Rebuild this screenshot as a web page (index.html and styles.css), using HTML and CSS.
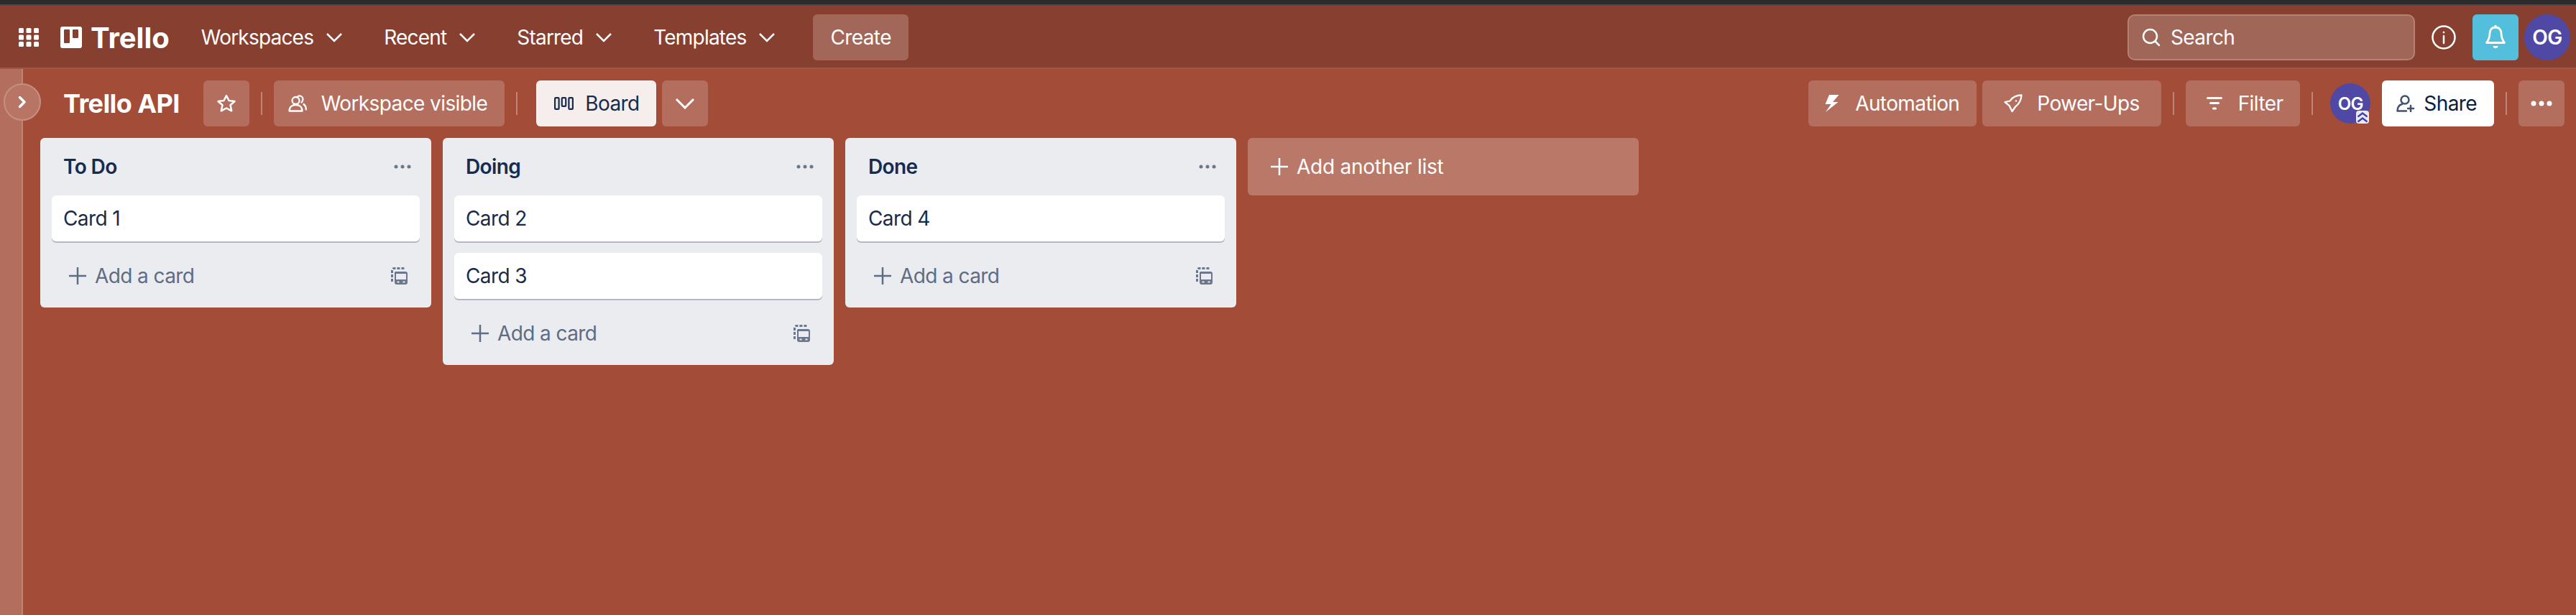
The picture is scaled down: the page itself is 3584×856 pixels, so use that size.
FILE: index.html
```html
<!DOCTYPE html>
<html lang="en">

<head>
    <meta charset="UTF-8">
    <meta name="viewport" content="width=device-width, initial-scale=1.0">
    <title>Trello API</title>
    <link rel="stylesheet" href="styles.css">
</head>

<body>
    <div class="chrome"></div>
    <header class="topbar">
        <svg class="grid-icon" width="28" height="26" viewBox="0 0 28 26" fill="#fff">
            <rect x="0" y="0" width="7" height="7" rx="1.5"/><rect x="10.500" y="0" width="7" height="7" rx="1.5"/><rect x="21" y="0" width="7" height="7" rx="1.5"/>
            <rect x="0" y="9.500" width="7" height="7" rx="1.5"/><rect x="10.500" y="9.500" width="7" height="7" rx="1.5"/><rect x="21" y="9.500" width="7" height="7" rx="1.5"/>
            <rect x="0" y="19" width="7" height="7" rx="1.5"/><rect x="10.500" y="19" width="7" height="7" rx="1.500"/><rect x="21" y="19" width="7" height="7" rx="1.5"/>
        </svg>
        <div class="logo">
            <svg width="30" height="30" viewBox="0 0 30 30" fill="#fff">
                <path fill-rule="evenodd" d="M3 0h24a3 3 0 0 1 3 3v24a3 3 0 0 1-3 3H3a3 3 0 0 1-3-3V3a3 3 0 0 1 3-3zm2 5v17a1 1 0 0 0 1 1h6a1 1 0 0 0 1-1V5a1 1 0 0 0-1-1H6a1 1 0 0 0-1 1zm12 0v10a1 1 0 0 0 1 1h6a1 1 0 0 0 1-1V5a1 1 0 0 0-1-1h-6a1 1 0 0 0-1 1z"/>
            </svg>
            <span>Trello</span>
        </div>
        <nav class="nav">
            <a class="nav-item">Workspaces <svg class="chev" viewBox="0 0 24 14"><path d="M2 2l10 10L22 2"/></svg></a>
            <a class="nav-item">Recent <svg class="chev" viewBox="0 0 24 14"><path d="M2 2l10 10L22 2"/></svg></a>
            <a class="nav-item">Starred <svg class="chev" viewBox="0 0 24 14"><path d="M2 2l10 10L22 2"/></svg></a>
            <a class="nav-item">Templates <svg class="chev" viewBox="0 0 24 14"><path d="M2 2l10 10L22 2"/></svg></a>
        </nav>
        <a class="create">Create</a>
        <div class="topbar-right">
            <div class="search">
                <svg width="26" height="26" viewBox="0 0 26 26" fill="none" stroke="#fff" stroke-width="2.500"><circle cx="11.500" cy="11.500" r="9.500"/><path d="M18.500 18.500l5.500 5.500" stroke-linecap="round"/></svg>
                <span>Search</span>
            </div>
            <svg class="info" width="34" height="34" viewBox="0 0 34 34" fill="none" stroke="#fff" stroke-width="2.500"><circle cx="17" cy="17" r="15.500"/><path d="M17 15v10" stroke-linecap="round"/><circle cx="17" cy="10" r="1" fill="#fff" stroke-width="1"/></svg>
            <div class="bell">
                <svg width="28" height="34" viewBox="0 0 28 34" fill="none" stroke="#fff" stroke-width="2.800" stroke-linejoin="round"><path d="M14 3c-5.500 0-8 4-8 8.500 0 5-1.500 9-4.500 13h25c-3-4-4.500-8-4.500-13C22 7 19.500 3 14 3z"/><path d="M14 1v2" stroke-linecap="round"/><path d="M10.500 29h7a3.500 3 0 0 1-7 0z" fill="#fff" stroke="none"/></svg>
            </div>
            <div class="avatar avatar-top">OG</div>
        </div>
    </header>

    <div class="board">
        <aside class="sidebar">
            <div class="sidebar-toggle">
                <svg width="12" height="18" viewBox="0 0 12 18" fill="none" stroke="#fff" stroke-width="3.500" stroke-linecap="round" stroke-linejoin="round"><path d="M2.500 2.500L9 9l-6.500 6.500"/></svg>
            </div>
        </aside>
        <main class="board-main">
            <div class="board-bar">
                <h1 class="board-title">Trello API</h1>
                <a class="btn btn-icon">
                    <svg width="28" height="26" viewBox="0 0 28 26" fill="none" stroke="#fff" stroke-width="2.500" stroke-linejoin="round"><path d="M14 2l3.500 7 8 1-6 5.300 1.700 8L14 19.500l-7.200 3.800 1.700-8-6-5.300 8-1z"/></svg>
                </a>
                <span class="sep"></span>
                <a class="btn btn-ws">
                    <svg width="26" height="24" viewBox="0 0 26 24" fill="none" stroke="#fff" stroke-width="2.300"><circle cx="10.500" cy="8" r="5"/><path d="M1.500 22.500c0-5.500 4-8.500 9-8.500s9 3 9 8.500z" stroke-linejoin="round"/><path d="M13.500 2c3.500-1.500 7 .5 7 4 0 2-1 3.500-2 4.500M21.500 13c2.500 2 3.500 4.500 3.300 7.500" stroke-linecap="round"/></svg>
                    Workspace visible
                </a>
                <span class="sep sep-wide"></span>
                <a class="btn btn-light">
                    <svg width="27" height="18" viewBox="0 0 27 18" fill="none" stroke="#172b4d" stroke-width="2.200"><rect x="1.100" y="1.100" width="5.500" height="15.800" rx="1.200"/><rect x="10.750" y="1.100" width="5.500" height="11.800" rx="1.200"/><rect x="20.400" y="1.100" width="5.500" height="15.800" rx="1.200"/></svg>
                    Board
                </a>
                <a class="btn btn-icon">
                    <svg class="chev chev-lg" viewBox="0 0 28 16"><path d="M2 2l12 12L26 2"/></svg>
                </a>

                <div class="board-bar-right">
                    <a class="btn btn-auto">
                        <svg width="20" height="24" viewBox="0 0 20 24" fill="#fff"><path d="M6 0h13.500L11 10h7.500L1 24l7.500-11H0.500z"/></svg>
                        Automation
                    </a>
                    <a class="btn btn-power">
                        <svg width="26" height="26" viewBox="0 0 26 26" fill="none" stroke="#fff" stroke-width="2.300" stroke-linejoin="round"><path d="M24.500 1.500c-7.500 0-12.500 2.500-16 8l-7 1.500 6 5 4 8 4.500-6.500c5.500-4 8-9 8.500-16z"/><circle cx="17" cy="9.500" r="1.200" fill="#fff" stroke="none"/></svg>
                        Power-Ups
                    </a>
                    <span class="sep"></span>
                    <a class="btn btn-filter">
                        <svg width="24" height="18" viewBox="0 0 24 18" fill="#fff"><rect x="1" width="22" height="3" rx="1.500"/><rect x="5" y="7" width="14" height="3" rx="1.500"/><rect x="9" y="14.500" width="6" height="3" rx="1.500"/></svg>
                        Filter
                    </a>
                    <span class="sep"></span>
                    <div class="avatar avatar-board">OG<span class="admin-badge"><svg width="16" height="15" viewBox="0 0 16 15" fill="none" stroke="#3f3fb0" stroke-width="2.300"><path d="M1.500 6.500L8 1.500l6.500 5M1.500 13.500L8 8.500l6.500 5"/></svg></span></div>
                    <a class="btn btn-share">
                        <svg width="26" height="24" viewBox="0 0 26 24" fill="none" stroke="#42526e" stroke-width="2.500" stroke-linecap="round" stroke-linejoin="round"><circle cx="12" cy="7" r="5.500"/><path d="M8 13c-4 1-6.500 4-6.500 9.500H14M20 15v8M16 19h8"/></svg>
                        Share
                    </a>
                    <span class="sep"></span>
                    <a class="btn btn-icon">
                        <svg width="30" height="8" viewBox="0 0 30 8" fill="#fff"><circle cx="4" cy="4" r="3.500"/><circle cx="15" cy="4" r="3.500"/><circle cx="26" cy="4" r="3.500"/></svg>
                    </a>
                </div>
            </div>

            <div class="lists">
                <section class="list">
                    <div class="list-head">
                        <h2>To Do</h2>
                        <svg class="dots" width="24" height="6" viewBox="0 0 24 6"><circle cx="3" cy="3" r="2.500"/><circle cx="12" cy="3" r="2.500"/><circle cx="21" cy="3" r="2.500"/></svg>
                    </div>
                    <div class="card">Card 1</div>
                    <div class="list-foot">
                        <svg class="plus" width="24" height="24" viewBox="0 0 24 24"><path d="M12 0v24M0 12h24"/></svg>
                        <span>Add a card</span>
                        <svg class="template" width="24" height="24" viewBox="0 0 24 24"><path class="dash" d="M1.500 20V4.500a3 3 0 0 1 3-3H20"/><path d="M6 6h14a3 3 0 0 1 3 3v12a3 3 0 0 1-3 3H8a3 3 0 0 1-3-3V7zm1 11v-8h14v8zm1.500 2.500v2h3v-2zm8 0v2h3v-2z" class="fill"/></svg>
                    </div>
                </section>
                <section class="list">
                    <div class="list-head">
                        <h2>Doing</h2>
                        <svg class="dots" width="24" height="6" viewBox="0 0 24 6"><circle cx="3" cy="3" r="2.500"/><circle cx="12" cy="3" r="2.500"/><circle cx="21" cy="3" r="2.500"/></svg>
                    </div>
                    <div class="card">Card 2</div>
                    <div class="card">Card 3</div>
                    <div class="list-foot">
                        <svg class="plus" width="24" height="24" viewBox="0 0 24 24"><path d="M12 0v24M0 12h24"/></svg>
                        <span>Add a card</span>
                        <svg class="template" width="24" height="24" viewBox="0 0 24 24"><path class="dash" d="M1.500 20V4.500a3 3 0 0 1 3-3H20"/><path d="M6 6h14a3 3 0 0 1 3 3v12a3 3 0 0 1-3 3H8a3 3 0 0 1-3-3V7zm1 11v-8h14v8zm1.500 2.500v2h3v-2zm8 0v2h3v-2z" class="fill"/></svg>
                    </div>
                </section>
                <section class="list">
                    <div class="list-head">
                        <h2>Done</h2>
                        <svg class="dots" width="24" height="6" viewBox="0 0 24 6"><circle cx="3" cy="3" r="2.500"/><circle cx="12" cy="3" r="2.500"/><circle cx="21" cy="3" r="2.500"/></svg>
                    </div>
                    <div class="card">Card 4</div>
                    <div class="list-foot">
                        <svg class="plus" width="24" height="24" viewBox="0 0 24 24"><path d="M12 0v24M0 12h24"/></svg>
                        <span>Add a card</span>
                        <svg class="template" width="24" height="24" viewBox="0 0 24 24"><path class="dash" d="M1.500 20V4.500a3 3 0 0 1 3-3H20"/><path d="M6 6h14a3 3 0 0 1 3 3v12a3 3 0 0 1-3 3H8a3 3 0 0 1-3-3V7zm1 11v-8h14v8zm1.500 2.500v2h3v-2zm8 0v2h3v-2z" class="fill"/></svg>
                    </div>
                </section>
                <a class="add-list">
                    <svg class="plus" width="24" height="24" viewBox="0 0 24 24"><path d="M12 0v24M0 12h24"/></svg>
                    Add another list
                </a>
            </div>
        </main>
    </div>
</body>

</html>
```

FILE: styles.css
```css
* {
    margin: 0;
    padding: 0;
    box-sizing: border-box;
}

html,
body {
    height: 100%;
    overflow: hidden;
}

body {
    display: flex;
    flex-direction: column;
    background-color: #a34d38;
    font-family: Inter, "Liberation Sans", sans-serif;
    font-size: 28px;
    letter-spacing: -0.6px;
    color: #fff;
}

.chrome {
    flex: none;
    height: 8px;
    background-color: #2b2b2b;
    border-bottom: 2px solid #4a4a4a;
}

/* top bar */
.topbar {
    flex: none;
    display: flex;
    align-items: center;
    height: 88px;
    padding: 2px 8px 0 26px;
    background-color: #873f2f;
    border-bottom: 2px solid #9b5847;
}

.logo {
    display: flex;
    align-items: center;
    gap: 12px;
    margin-left: 30px;
    font-size: 40px;
    font-weight: 700;
    letter-spacing: 0;
}

.nav {
    display: flex;
    gap: 57px;
    margin-left: 44px;
    letter-spacing: -0.8px;
}

.nav-item {
    display: flex;
    align-items: center;
    gap: 17px;
}

.chev {
    width: 24px;
    height: 14px;
    fill: none;
    stroke: #fff;
    stroke-width: 2.5;
}

.chev-lg {
    width: 28px;
    height: 16px;
    stroke-width: 3;
}

.create {
    display: flex;
    align-items: center;
    height: 64px;
    margin-left: 52px;
    padding: 0 24px;
    border-radius: 6px;
    background-color: #a26758;
}

.topbar-right {
    display: flex;
    align-items: center;
    margin-left: auto;
}

.search {
    display: flex;
    align-items: center;
    gap: 14px;
    width: 400px;
    height: 64px;
    padding-left: 18px;
    border: 2px solid #b58174;
    border-radius: 10px;
    background-color: #a06657;
}

.info {
    margin: 0 23px;
}

.bell {
    display: flex;
    align-items: center;
    justify-content: center;
    width: 64px;
    height: 64px;
    border-radius: 6px;
    background-color: #53bfdd;
}

.avatar {
    display: flex;
    align-items: center;
    justify-content: center;
    border-radius: 50%;
    background-color: #4f48a5;
    font-weight: 600;
}

.avatar-top {
    width: 64px;
    height: 64px;
    margin-left: 8px;
}

/* board */
.board {
    display: flex;
    flex: 1;
}

.sidebar {
    position: relative;
    flex: none;
    width: 32px;
    background-color: #b36e5e;
    border-right: 2px solid #bf8475;
}

.sidebar-toggle {
    position: absolute;
    top: 20px;
    left: 5px;
    display: flex;
    align-items: center;
    justify-content: center;
    width: 52px;
    height: 52px;
    border: 2px solid #c58f82;
    border-radius: 50%;
    background-color: #b87565;
}

.board-main {
    flex: 1;
    min-width: 0;
}

.board-bar {
    display: flex;
    align-items: center;
    height: 96px;
    padding: 0 16px 0 56px;
}

.board-title {
    margin-right: 33px;
    font-size: 36px;
    font-weight: 700;
}

.btn {
    display: flex;
    align-items: center;
    gap: 16px;
    height: 64px;
    padding: 0 24px;
    border-radius: 6px;
    background-color: #b36e5e;
}

.btn-icon {
    justify-content: center;
    width: 64px;
    padding: 0;
}

.btn-ws {
    gap: 20px;
    padding-left: 20px;
}

.btn-light {
    padding: 0 23px 0 25px;
    background-color: #f5eeec;
    color: #172b4d;
}

.btn-auto {
    gap: 22px;
    padding-left: 23px;
}

.btn-power {
    gap: 20px;
    padding: 0 30px;
}

.btn-filter {
    gap: 21px;
    padding-left: 28px;
}

.btn-share {
    gap: 12px;
    padding: 0 24px 0 20px;
    background-color: #fff;
    color: #091e42;
}

.btn-light+.btn-icon {
    margin-left: 8px;
}

.sep {
    flex: none;
    width: 2px;
    height: 32px;
    margin: 0 16px;
    background-color: #bf8475;
}

.sep-wide {
    margin-right: 26px;
}

.board-bar-right {
    display: flex;
    align-items: center;
    gap: 8px;
    margin-left: auto;
}

.board-bar-right .sep {
    margin: 0 8px;
}

.avatar-board {
    position: relative;
    width: 56px;
    height: 56px;
    margin: 0 8px;
    font-size: 24px;
}

.admin-badge {
    position: absolute;
    right: 2px;
    bottom: 0;
    display: flex;
    align-items: center;
    justify-content: center;
    width: 18px;
    height: 18px;
    border-radius: 4px;
    background-color: #e9ebf2;
}

/* lists */
.lists {
    display: flex;
    align-items: flex-start;
    gap: 16px;
    padding-left: 24px;
}

.list {
    width: 544px;
    padding-bottom: 12px;
    border-radius: 6px;
    background-color: #ebecf0;
    color: #172b4d;
}

.list-head {
    display: flex;
    align-items: center;
    justify-content: space-between;
    height: 80px;
    padding: 0 28px 0 32px;
}

.list-head h2 {
    font-size: 28px;
    font-weight: 600;
}

.dots {
    fill: #6b778c;
}

.card {
    display: flex;
    align-items: center;
    height: 64px;
    margin: 0 16px 16px;
    padding-left: 16px;
    border-radius: 6px;
    background-color: #fff;
    box-shadow: 0 2px 0 #b3b8c6;
}

.list-foot {
    display: flex;
    align-items: center;
    gap: 12px;
    height: 64px;
    padding: 0 32px 0 40px;
    color: #5e6c84;
}

.list-foot .template {
    margin-left: auto;
}

.plus {
    flex: none;
    fill: none;
    stroke: #5e6c84;
    stroke-width: 2.5;
}

.template .dash {
    fill: none;
    stroke: #6b778c;
    stroke-width: 3;
    stroke-dasharray: 4 2;
}

.template .fill {
    fill: #6b778c;
    fill-rule: evenodd;
}

.add-list {
    display: flex;
    align-items: center;
    gap: 12px;
    width: 544px;
    height: 80px;
    padding-left: 32px;
    border-radius: 6px;
    background-color: #b97868;
    letter-spacing: -0.25px;
}

.add-list .plus {
    stroke: #fff;
}
```
